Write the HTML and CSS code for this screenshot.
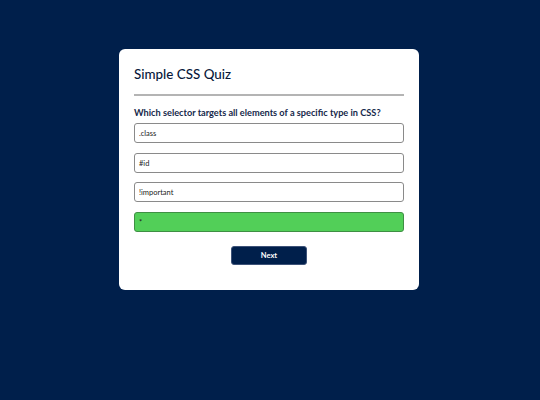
FILE: index.html
```html
<!DOCTYPE html>
<html>
<head>
<meta charset="utf-8">
<link rel="stylesheet" href="styles.css">
</head>
<body>
<div class="card">
  <h1 class="title">Simple CSS Quiz</h1>
  <hr class="rule">
  <p class="question">Which selector targets all elements of a specific type in CSS?</p>
  <div class="options">
    <div class="option">.class</div>
    <div class="option">#id</div>
    <div class="option">!important</div>
    <div class="option correct">*</div>
  </div>
  <div class="actions">
    <button class="next">Next</button>
  </div>
</div>
</body>
</html>
```
FILE: styles.css
```css
html, body {
  margin: 0;
  padding: 0;
  height: 100%;
}
body {
  background: #001f4b;
  font-family: Lato, "Noto Sans", sans-serif;
  padding: 49px 2px 0 0;
  box-sizing: border-box;
}
.card {
  width: 300px;
  margin: 0 auto;
  background: #fff;
  border-radius: 6px;
  padding: 15px 15px 25px;
  box-sizing: border-box;
}
.title {
  margin: 0;
  font-size: 13.4px;
  line-height: 20px;
  font-weight: 500;
  color: #08183a;
}
.rule {
  margin: 10px 0 0;
  border: 0;
  height: 2px;
  background: #b4b4b4;
}
.question {
  margin: 10px 0 0;
  font-size: 9.2px;
  line-height: 14px;
  font-weight: 700;
  color: #16284a;
  white-space: nowrap;
}
.options {
  margin-top: 3px;
  display: flex;
  flex-direction: column;
  gap: 9.5px;
}
.option {
  height: 20px;
  box-sizing: border-box;
  border: 1px solid #8a8a8a;
  border-radius: 3px;
  padding: 1px 4px 0;
  font-size: 7.5px;
  line-height: 18px;
  color: #222;
}
.option.correct {
  background: #52cf58;
  border-color: #3f8f44;
}
.actions {
  margin-top: 14px;
  display: flex;
  justify-content: center;
}
.next {
  width: 76px;
  height: 19px;
  background: #001f4b;
  color: #fff;
  border: 1px solid #3d5278;
  border-radius: 3px;
  font-family: inherit;
  font-size: 7.5px;
  font-weight: 700;
  padding: 0;
}
```
